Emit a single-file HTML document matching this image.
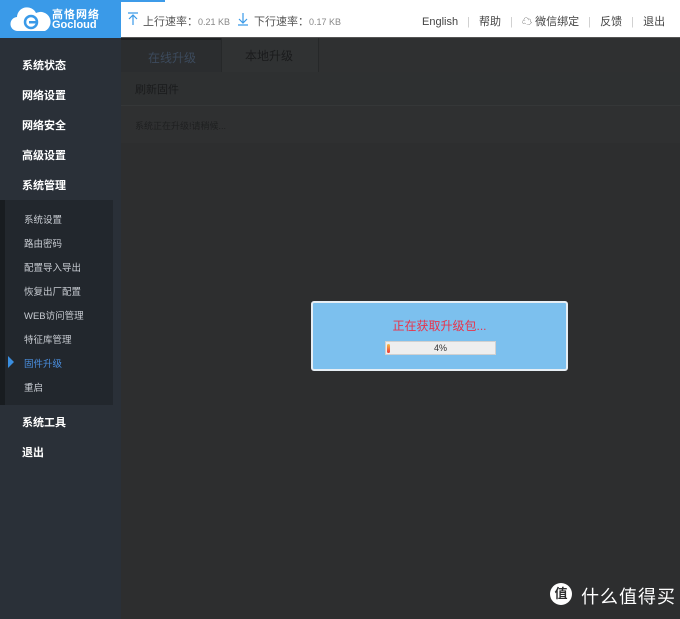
<!DOCTYPE html>
<html><head><meta charset="utf-8"><style>
*{margin:0;padding:0;box-sizing:border-box}
body{width:680px;height:619px;overflow:hidden;background:#2d2e2f;font-family:"Liberation Sans","Noto Sans CJK SC",sans-serif;position:relative}
.hdr{position:absolute;left:0;top:0;width:680px;height:38px;background:#fff;border-bottom:1px solid #555}
.pb{position:absolute;left:0;top:0;width:165px;height:2px;background:#3d9be9}
.logo{position:absolute;left:0;top:0;width:121px;height:38px;background:#3a9ae8;color:#fff}
.side{position:absolute;left:0;top:38px;width:121px;height:581px;background:#2a3038}
.side .m{position:absolute;left:22px;color:#fff;font-size:11px;font-weight:bold}
.sub{position:absolute;left:0;top:162px;width:113px;height:205px;background:#22272d;border-left:5px solid #181c20}
.sub div{position:absolute;left:19px;font-size:9.5px;color:#c8ccd2}
.t{position:absolute;font-size:11px;color:#555}
.main{position:absolute;left:121px;top:38px;width:559px;height:581px}
.dlg{position:absolute;left:311px;top:301px;width:257px;height:70px;background:#7cc0ee;border:2px solid #e6eef4;border-radius:3px}
</style></head><body>
<div class="hdr"></div><div class="pb"></div>
<div class="logo">
<svg style="position:absolute;left:10px;top:7px" width="42" height="26" viewBox="0 0 42 26"><path d="M8 24a7 7 0 0 1-1-14a10 10 0 0 1 19-4a8 8 0 0 1 9 18z" fill="#fff"/><circle cx="21" cy="15" r="6" fill="none" stroke="#3a9ae8" stroke-width="2.5"/><rect x="19" y="14" width="8" height="2.5" fill="#3a9ae8"/></svg>
<div style="position:absolute;left:52px;top:6px;font-size:11px;font-weight:bold;letter-spacing:1px">高恪网络</div>
<div style="position:absolute;left:52px;top:19px;font-size:11px;font-weight:bold">Gocloud</div>
</div>
<svg style="position:absolute;left:127px;top:12px" width="12" height="14" viewBox="0 0 12 14"><path d="M1 1h10M6 3v10M2 7l4-4 4 4" fill="none" stroke="#3a9ae8" stroke-width="1.2"/></svg>
<svg style="position:absolute;left:237px;top:12px" width="12" height="14" viewBox="0 0 12 14"><path d="M1 13h10M6 1v10M2 7l4 4 4-4" fill="none" stroke="#3a9ae8" stroke-width="1.2"/></svg>
<div style="position:absolute;left:143px;top:13px;font-size:11px;color:#555;white-space:nowrap">上行速率：<span style="font-size:9px;color:#888">0.21 KB</span></div>
<div style="position:absolute;left:254px;top:13px;font-size:11px;color:#555;white-space:nowrap">下行速率：<span style="font-size:9px;color:#888">0.17 KB</span></div>
<div style="position:absolute;left:422px;top:13px;font-size:11px;color:#444;white-space:nowrap">English <span style="color:#ccc;margin:0 6px">|</span> 帮助 <span style="color:#ccc;margin:0 6px">|</span> <span style="font-size:10px">☁</span> 微信绑定 <span style="color:#ccc;margin:0 6px">|</span> 反馈 <span style="color:#ccc;margin:0 6px">|</span> 退出</div>
<div class="side">
<div class="m" style="top:19px">系统状态</div><div class="m" style="top:49px">网络设置</div><div class="m" style="top:79px">网络安全</div><div class="m" style="top:109px">高级设置</div><div class="m" style="top:139px">系统管理</div>
<div class="sub">
<div style="top:12px">系统设置</div><div style="top:36px">路由密码</div><div style="top:60px">配置导入导出</div><div style="top:84px">恢复出厂配置</div><div style="top:108px">WEB访问管理</div><div style="top:132px">特征库管理</div><div style="top:156px;color:#4a8fe0">固件升级</div><div style="top:180px">重启</div>
</div>
<div style="position:absolute;left:8px;top:318px;width:0;height:0;border-top:6px solid transparent;border-bottom:6px solid transparent;border-left:6px solid #3a8ee0"></div>
<div class="m" style="top:376px">系统工具</div><div class="m" style="top:406px">退出</div>
</div>
<div class="main">
<div style="position:absolute;left:0;top:0;width:559px;height:34px;background:#2f3031"></div>
<div style="position:absolute;left:0;top:0;width:100px;height:34px;background:#2b2d2f;border-top:2px solid #1e2022"></div>
<div style="position:absolute;left:100px;top:0;width:98px;height:34px;background:#303233;border-left:1px solid #262829;border-right:1px solid #262829"></div>
<div class="t" style="left:27px;top:11px;font-size:12px;color:#3c4a5c">在线升级</div>
<div class="t" style="left:124px;top:9px;font-size:12px;color:#1a1b1c">本地升级</div>
<div style="position:absolute;left:0;top:34px;width:559px;height:34px;background:#2e3031;border-bottom:1px solid #353738"></div>
<div class="t" style="left:14px;top:43px;font-size:11px;color:#1a1b1c">刷新固件</div>
<div style="position:absolute;left:0;top:68px;width:559px;height:37px;background:#2f3031"></div>
<div class="t" style="left:14px;top:81px;font-size:9px;color:#1e1f20">系统正在升级!请稍候...</div>
</div>
<div class="dlg">
<div style="position:absolute;left:0;width:253px;top:14px;text-align:center;color:#e8334a;font-size:12px">正在获取升级包...</div>
<div style="position:absolute;left:72px;top:38px;width:111px;height:14px;background:#eee;border:1px solid #d0d0d0;font-size:9px;text-align:center;line-height:12px;color:#333">4%<div style="position:absolute;left:1px;top:2px;width:3px;height:9px;background:linear-gradient(#f7c24a,#e33);border-radius:2px"></div></div>
</div>
<div style="position:absolute;left:550px;top:583px;width:22px;height:22px;border-radius:50%;background:#fff;color:#2d2e2f;font-size:13px;font-weight:bold;text-align:center;line-height:22px">值</div>
<div style="position:absolute;left:581px;top:583px;color:#fff;font-size:18px;letter-spacing:1px">什么值得买</div>
</body></html>
